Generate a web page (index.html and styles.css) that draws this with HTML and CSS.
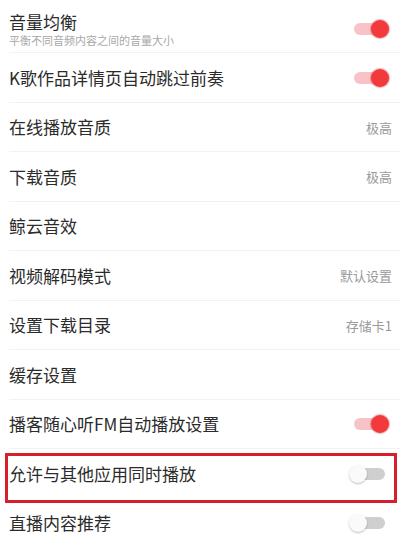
FILE: index.html
```html
<!DOCTYPE html>
<html lang="zh-CN">
<head>
<meta charset="utf-8">
<link rel="stylesheet" href="styles.css">
</head>
<body>
<ul class="settings">
  <li class="row row-first">
    <div class="label">
      <div class="title">音量均衡</div>
      <div class="sub">平衡不同音频内容之间的音量大小</div>
    </div>
    <span class="switch on"><span class="track"></span><span class="thumb"></span></span>
  </li>
  <li class="row">
    <div class="title">K歌作品详情页自动跳过前奏</div>
    <span class="switch on"><span class="track"></span><span class="thumb"></span></span>
  </li>
  <li class="row">
    <div class="title">在线播放音质</div>
    <span class="value">极高</span>
  </li>
  <li class="row">
    <div class="title">下载音质</div>
    <span class="value">极高</span>
  </li>
  <li class="row">
    <div class="title">鲸云音效</div>
  </li>
  <li class="row">
    <div class="title">视频解码模式</div>
    <span class="value">默认设置</span>
  </li>
  <li class="row">
    <div class="title">设置下载目录</div>
    <span class="value">存储卡1</span>
  </li>
  <li class="row">
    <div class="title">缓存设置</div>
  </li>
  <li class="row">
    <div class="title">播客随心听FM自动播放设置</div>
    <span class="switch on"><span class="track"></span><span class="thumb"></span></span>
  </li>
  <li class="row highlighted">
    <div class="title">允许与其他应用同时播放</div>
    <span class="switch off"><span class="track"></span><span class="thumb"></span></span>
  </li>
  <li class="row">
    <div class="title">直播内容推荐</div>
    <span class="switch off"><span class="track"></span><span class="thumb"></span></span>
  </li>
</ul>
</body>
</html>
```

FILE: styles.css
```css
html, body {
  margin: 0;
  padding: 0;
  background: #ffffff;
}

body {
  width: 400px;
  height: 545px;
  overflow: hidden;
  font-family: "Noto Sans CJK SC", "Noto Sans", "Liberation Sans", sans-serif;
  color: #2b2b2b;
}

.settings {
  list-style: none;
  margin: 0;
  padding: 0;
}

.row {
  position: relative;
  display: flex;
  align-items: center;
  justify-content: space-between;
  height: 49.5px;
  box-sizing: border-box;
  padding-left: 9px;
  padding-right: 8px;
}

.row::after {
  content: "";
  position: absolute;
  left: 9px;
  right: 0;
  bottom: 0;
  height: 1px;
  background: #f2f2f2;
}

.row-first {
  height: 53px;
  padding-top: 4px;
}

.title {
  font-size: 17px;
  line-height: 22px;
  color: #2b2b2b;
  white-space: nowrap;
}

.sub {
  font-size: 11px;
  line-height: 14px;
  color: #a8a8a8;
  white-space: nowrap;
}

.value {
  font-size: 13px;
  color: #9a9a9a;
}

.switch {
  position: relative;
  display: block;
  width: 40px;
  height: 18px;
  margin-right: 3px;
  flex: none;
}

.switch .track {
  position: absolute;
  left: 5px;
  right: 4px;
  top: 3px;
  height: 12px;
  border-radius: 6px;
  background: #cfcfcf;
}

.switch .thumb {
  position: absolute;
  top: 0;
  width: 18px;
  height: 18px;
  border-radius: 50%;
}

.switch.on .track {
  background: #f8c3c6;
}

.switch.on .thumb {
  right: 0;
  background: #f23a3d;
  box-shadow: 0 0 1px 1px rgba(200, 30, 40, 0.35);
}

.switch.off .thumb {
  left: 0;
  background: #fafafa;
  box-shadow: 0 1px 2px rgba(0, 0, 0, 0.25);
}

.highlighted::before {
  content: "";
  position: absolute;
  left: 5px;
  right: 3px;
  top: 4px;
  bottom: -4.5px;
  border: 3px solid #d61f2a;
  z-index: 1;
  pointer-events: none;
}

.highlighted::after {
  display: none;
}
```
